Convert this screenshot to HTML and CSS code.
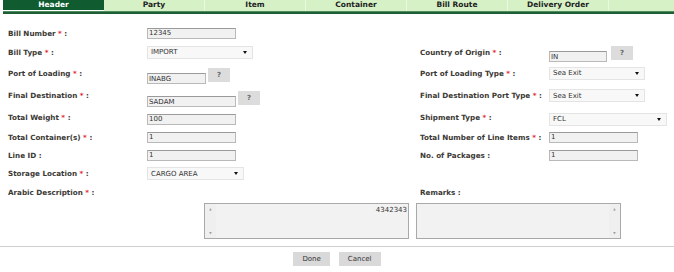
FILE: index.html
```html
<!DOCTYPE html>
<html lang="en">
<head>
    <meta charset="UTF-8">
    <meta name="viewport" content="width=device-width, initial-scale=1.0">
    <title>Bill - Header</title>
    <link rel="stylesheet" href="styles.css">
</head>
<body>
    <div class="tabs">
        <div class="tab active">Header</div>
        <div class="tab">Party</div>
        <div class="tab">Item</div>
        <div class="tab">Container</div>
        <div class="tab">Bill Route</div>
        <div class="tab">Delivery Order</div>
        <div class="tab-fill"></div>
    </div>
    <div class="tab-line"></div>

    <form class="form" onsubmit="return false;">
        <div class="grid">
            <!-- row 1 -->
            <div class="lbl"><span>Bill Number <span class="req">*</span> :</span></div>
            <div class="ctl"><input class="txt w89" type="text" value="12345"></div>
            <div class="lbl"></div>
            <div class="ctl"></div>

            <!-- row 2 -->
            <div class="lbl"><span>Bill Type <span class="req">*</span> :</span></div>
            <div class="ctl">
                <span class="select w106"><select><option>IMPORT</option><option>EXPORT</option></select></span>
            </div>
            <div class="lbl"><span>Country of Origin <span class="req">*</span> :</span></div>
            <div class="ctl lookup">
                <input class="txt w58" type="text" value="IN">
                <button class="ask" type="button">?</button>
            </div>

            <!-- row 3 -->
            <div class="lbl"><span>Port of Loading <span class="req">*</span> :</span></div>
            <div class="ctl lookup">
                <input class="txt w59" type="text" value="INABG">
                <button class="ask" type="button">?</button>
            </div>
            <div class="lbl"><span>Port of Loading Type <span class="req">*</span> :</span></div>
            <div class="ctl">
                <span class="select w96"><select><option>Sea Exit</option></select></span>
            </div>

            <!-- row 4 -->
            <div class="lbl"><span>Final Destination <span class="req">*</span> :</span></div>
            <div class="ctl lookup">
                <input class="txt w89" type="text" value="SADAM">
                <button class="ask" type="button">?</button>
            </div>
            <div class="lbl"><span>Final Destination Port Type <span class="req">*</span> :</span></div>
            <div class="ctl">
                <span class="select w96"><select><option>Sea Exit</option></select></span>
            </div>

            <!-- row 5 -->
            <div class="lbl"><span>Total Weight <span class="req">*</span> :</span></div>
            <div class="ctl low"><input class="txt w89" type="text" value="100"></div>
            <div class="lbl"><span>Shipment Type <span class="req">*</span> :</span></div>
            <div class="ctl low">
                <span class="select w118"><select><option>FCL</option><option>LCL</option></select></span>
            </div>

            <!-- row 6 -->
            <div class="lbl"><span>Total Container(s) <span class="req">*</span> :</span></div>
            <div class="ctl"><input class="txt w89" type="text" value="1"></div>
            <div class="lbl"><span>Total Number of Line Items <span class="req">*</span> :</span></div>
            <div class="ctl"><input class="txt w89" type="text" value="1"></div>

            <!-- row 7 -->
            <div class="lbl"><span>Line ID :</span></div>
            <div class="ctl"><input class="txt w89" type="text" value="1"></div>
            <div class="lbl"><span>No. of Packages :</span></div>
            <div class="ctl"><input class="txt w89" type="text" value="1"></div>

            <!-- row 8 -->
            <div class="lbl"><span>Storage Location <span class="req">*</span> :</span></div>
            <div class="ctl">
                <span class="select w97"><select><option>CARGO AREA</option></select></span>
            </div>
            <div class="lbl"></div>
            <div class="ctl"></div>

            <!-- row 9 -->
            <div class="lbl"><span>Arabic Description <span class="req">*</span> :</span></div>
            <div class="ctl"></div>
            <div class="lbl"><span>Remarks :</span></div>
            <div class="ctl"></div>
        </div>

        <div class="memos">
            <div class="memo" dir="rtl">
                <textarea>4342343</textarea>
                <div class="scroll"><span>&#9650;</span><span>&#9660;</span></div>
            </div>
            <div class="memo">
                <textarea></textarea>
                <div class="scroll"><span>&#9650;</span><span>&#9660;</span></div>
            </div>
        </div>

        <div class="actions">
            <button class="btn" type="button">Done</button>
            <button class="btn" type="button">Cancel</button>
        </div>
    </form>
</body>
</html>
```

FILE: styles.css
```css
:root {
    --tab-dark: #105b30;
    --tab-light: #d6f1c6;
    --label-color: #3b3935;
    --field-bg: #f1f1f1;
}

* {
    margin: 0;
    padding: 0;
    box-sizing: border-box;
}

body {
    font-family: 'DejaVu Sans', Verdana, sans-serif;
    font-size: 7px;
    color: var(--label-color);
    background-color: white;
}

/* tab strip */
.tabs {
    display: flex;
    height: 11px;
    margin-left: 3px;
}

.tab {
    width: 101px;
    background-color: var(--tab-light);
    border-right: 1px solid #eaf8e0;
    font-weight: bold;
    font-size: 7.5px;
    color: #222;
    text-align: center;
    line-height: 10px;
}

.tab.active {
    background-color: var(--tab-dark);
    color: white;
    height: 10px;
    border-right: none;
}

.tab-fill {
    flex: 1;
    background-color: var(--tab-light);
}

.tab-line {
    height: 3px;
    margin-left: 3px;
    background-color: #1f5f36;
    border-top: 1px solid #4f8c5f;
}

/* form grid */
.form {
    padding-left: 8px;
    margin-top: 10px;
}

.grid {
    display: grid;
    grid-template-columns: 139px 273px 129px 125px;
    grid-template-rows: 18px 20px 22px 23px 21px 18px 18px 19px 18px;
}

.lbl {
    display: flex;
    align-items: center;
    font-weight: bold;
    font-size: 7.2px;
    white-space: nowrap;
}

.req {
    color: #e3202a;
}

.ctl {
    display: flex;
    align-items: center;
}

.ctl.low {
    padding-top: 3px;
}

.ctl.lookup {
    align-items: flex-end;
    gap: 2px;
}

.txt {
    height: 11px;
    border: 1px solid #b9b9b9;
    border-top-color: #9a9a9a;
    background-color: var(--field-bg);
    font-family: inherit;
    font-size: 7px;
    color: #333;
    padding: 0 1px;
}

.w58 { width: 58px; }
.w59 { width: 59px; }
.w89 { width: 89px; }
.w96 { width: 96px; }
.w97 { width: 97px; }
.w106 { width: 106px; }
.w118 { width: 118px; }

.ask {
    width: 22px;
    height: 14px;
    margin-bottom: 2px;
    border: none;
    background-color: #dcdcdc;
    font-family: inherit;
    font-size: 7px;
    font-weight: bold;
    color: #666;
}

.ctl.lookup .w58 + .ask {
    margin-left: 2px;
}

.select {
    position: relative;
    display: inline-block;
    height: 13px;
}

.select select {
    appearance: none;
    -webkit-appearance: none;
    width: 100%;
    height: 13px;
    border: 1px solid #e4e4e4;
    background-color: #f8f8f8;
    font-family: inherit;
    font-size: 7px;
    color: #333;
    padding-left: 3px;
    outline: none;
}

.select::after {
    content: "";
    position: absolute;
    right: 6px;
    top: 5px;
    border-left: 2px solid transparent;
    border-right: 2px solid transparent;
    border-top: 3px solid #111;
}

/* memo fields */
.memos {
    display: flex;
    gap: 7px;
    padding-left: 196px;
    margin-top: 2px;
}

.memo {
    display: flex;
    width: 205px;
    height: 36px;
    border: 1px solid #a9a9a9;
    background-color: #f2f2f2;
}

.memo textarea {
    flex: 1;
    border: none;
    background: transparent;
    resize: none;
    overflow: hidden;
    font-family: inherit;
    font-size: 7px;
    color: #333;
    padding: 2px 1px;
    outline: none;
}

.scroll {
    width: 11px;
    display: flex;
    flex-direction: column;
    justify-content: space-between;
    align-items: center;
    padding: 3px 0;
    background-color: #efefef;
    font-size: 3px;
    color: #999;
}

/* bottom bar */
.actions {
    display: flex;
    justify-content: center;
    gap: 9px;
    margin-left: -8px;
    margin-top: 7px;
    padding-top: 5px;
    border-top: 1px solid #cfcfcf;
}

.btn {
    height: 14px;
    padding: 0 9px;
    border: none;
    background-color: #d9d9d9;
    font-family: inherit;
    font-size: 7px;
    color: #333;
}
```
